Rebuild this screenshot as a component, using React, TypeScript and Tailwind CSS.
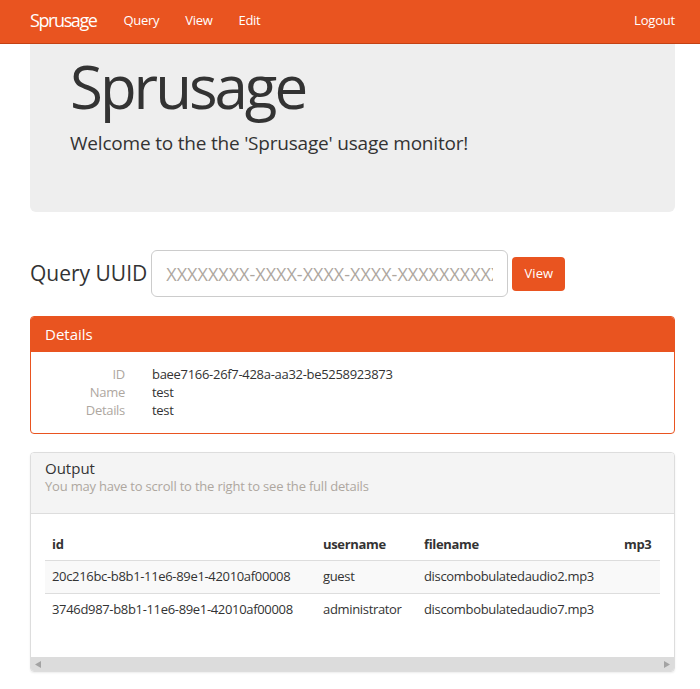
const font = "font-['Open_Sans','Noto_Sans',sans-serif]";

const rows = [
  { id: "20c216bc-b8b1-11e6-89e1-42010af00008", username: "guest", filename: "discombobulatedaudio2.mp3" },
  { id: "3746d987-b8b1-11e6-89e1-42010af00008", username: "administrator", filename: "discombobulatedaudio7.mp3" },
];

function Navbar() {
  return (
    <nav className="h-[44px] bg-[#e95420] border-b border-[#c34113] flex items-center pl-[30px] pr-[25px] pb-[2px] text-white">
      <span className="text-[18px] tracking-[-1.4px]">Sprusage</span>
      <div className="flex gap-[26px] ml-[27px] text-[13px] tracking-[-0.3px]">
        <span>Query</span>
        <span>View</span>
        <span>Edit</span>
      </div>
      <span className="ml-auto text-[13px] tracking-[-0.2px]">Logout</span>
    </nav>
  );
}

function Details() {
  const items = [
    ["ID", "baee7166-26f7-428a-aa32-be5258923873"],
    ["Name", "test"],
    ["Details", "test"],
  ];
  return (
    <div className="border border-[#e95420] rounded-[4px] overflow-hidden">
      <div className="bg-[#e95420] text-white text-[15px] h-[35px] flex items-center px-[14px] pb-[1px]">Details</div>
      <div className="grid grid-cols-[80px_1fr] gap-x-[27px] px-[14px] pt-[13px] pb-[14px] text-[13px] leading-[18px] tracking-[-0.3px]">
        {items.map(([k, v]) => (
          <div key={k} className="contents">
            <div className="text-right text-[#aea79f]">{k}</div>
            <div className="text-[#333]">{v}</div>
          </div>
        ))}
      </div>
    </div>
  );
}

function Output() {
  return (
    <div className="border border-[#ddd] rounded-[4px] overflow-hidden shadow-[0_1px_2px_rgba(0,0,0,0.08)]">
      <div className="bg-[#f4f4f4] border-b border-[#ddd] h-[61px] px-[14px] pt-[4px]">
        <div className="text-[15px] leading-[22px] text-[#333]">Output</div>
        <div className="text-[13px] leading-[15px] text-[#aea79f] tracking-[-0.2px]">You may have to scroll to the right to see the full details</div>
      </div>
      <div className="px-[14px] pt-[15px] h-[143px]">
        <div className="overflow-hidden">
          <table className="w-[700px] text-[13px] text-[#333] border-collapse table-fixed tracking-[-0.33px]">
            <colgroup>
              <col className="w-[271px]" />
              <col className="w-[101px]" />
              <col className="w-[200px]" />
              <col className="w-[128px]" />
            </colgroup>
            <thead>
              <tr className="h-[31px]">
                <th className="text-left font-bold px-[7px] align-middle">id</th>
                <th className="text-left font-bold px-[7px] align-middle">username</th>
                <th className="text-left font-bold px-[7px] align-middle">filename</th>
                <th className="text-left font-bold px-[7px] align-middle">mp3</th>
              </tr>
            </thead>
            <tbody>
              {rows.map((r, i) => (
                <tr key={r.id} className={`h-[33px] border-t border-[#ddd] ${i === 0 ? "bg-[#f9f9f9]" : ""}`}>
                  <td className="px-[7px] whitespace-nowrap">{r.id}</td>
                  <td className="px-[7px] whitespace-nowrap">{r.username}</td>
                  <td className="px-[7px] whitespace-nowrap">{r.filename}</td>
                  <td className="px-[7px]"></td>
                </tr>
              ))}
            </tbody>
          </table>
        </div>
      </div>
      <div className="h-[14px] bg-[#dcdcdc] flex items-center justify-between px-[4px]">
        <svg width="6" height="7" viewBox="0 0 6 7"><path d="M6 0 L0 3.5 L6 7 Z" fill="#a3a3a3" /></svg>
        <svg width="6" height="7" viewBox="0 0 6 7"><path d="M0 0 L6 3.5 L0 7 Z" fill="#a3a3a3" /></svg>
      </div>
    </div>
  );
}

export default function App() {
  return (
    <div className={`${font} bg-white min-h-[689px] text-[#333]`}>
      <Navbar />
      <div className="pl-[30px] pr-[25px]">
        <div className="bg-[#eeeeee] rounded-b-[6px] h-[168px] px-[40px] pt-[6px]">
          <h1 className="text-[60px] leading-[72px] tracking-[-3px]">Sprusage</h1>
          <p className="text-[19px] leading-[28px] mt-[7px] tracking-[-0.2px]">Welcome to the the 'Sprusage' usage monitor!</p>
        </div>
        <div className="flex items-center mt-[38px] h-[47px]">
          <span className="text-[21px] mr-[4px]">Query UUID</span>
          <input
            className="w-[357px] h-[47px] border border-[#ccc] rounded-[6px] px-[14px] text-[18px] placeholder:text-[#aea79f] outline-none"
            placeholder="XXXXXXXX-XXXX-XXXX-XXXX-XXXXXXXXXXXX"
          />
          <button className="ml-[4px] w-[53px] h-[34px] bg-[#e95420] text-white text-[13px] rounded-[4px]">View</button>
        </div>
        <div className="mt-[19px]">
          <Details />
        </div>
        <div className="mt-[18px]">
          <Output />
        </div>
      </div>
    </div>
  );
}
